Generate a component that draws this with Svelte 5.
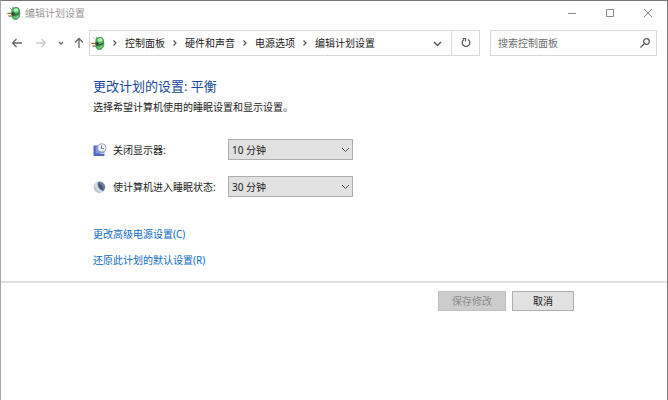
<script lang="ts">
  interface PlanSetting {
    id: string;
    label: string;
    icon: 'display' | 'sleep';
    value: string;
  }

  const title = '编辑计划设置';
  const crumbs = ['控制面板', '硬件和声音', '电源选项', title];
  const options = ['5 分钟', '10 分钟', '15 分钟', '30 分钟', '1 小时', '从不'];

  let settings = $state<PlanSetting[]>([
    { id: 'display-off', label: '关闭显示器:', icon: 'display', value: '10 分钟' },
    { id: 'sleep', label: '使计算机进入睡眠状态:', icon: 'sleep', value: '30 分钟' },
  ]);
  let query = $state('');
</script>

{#snippet powerIcon()}
  <svg class="power-icon" viewBox="0 0 14 14" aria-hidden="true">
    <path d="M4.5 3.5 2.5 1.5M6 2 5 .5M10 2l1-1.5" stroke="#888" stroke-width="0.7" fill="none" />
    <path d="M5 8.5c-.5 3 1 5 3.5 5s4.5-2.500 4.500-6z" fill="#52b563" stroke="#2c7a3d" stroke-width="0.6" />
    <ellipse cx="8.700" cy="5" rx="4" ry="3.700" fill="#4cb85f" stroke="#2c7a3d" stroke-width="0.6" />
    <ellipse cx="9" cy="4" rx="2.500" ry="1.800" fill="#b4efb8" />
    <path d="M4 6.500 6.500 6 8 7.500 7 10 4.500 9.500z" fill="#35453a" />
    <path d="M7.500 9c2.500 0 4-1 5.200-2.500" stroke="#24452d" fill="none" />
    <path d="M.5 7.500H4M1.500 10H5" stroke="#4b3c24" stroke-width="1.200" />
    <path d="M.5 7H4M1.500 9.500H5" stroke="#d9ad58" stroke-width="0.900" />
    <path d="M8.500 11.500c1 0 2-.5 2.800-1.500" stroke="#a3e8a8" stroke-width="0.900" fill="none" />
  </svg>
{/snippet}

{#snippet chevronDown()}
  <svg class="chevron" viewBox="0 0 9 9" aria-hidden="true">
    <path d="M1 3l3.500 3.500L8 3" />
  </svg>
{/snippet}

<div class="window">
  <header class="titlebar">
    {@render powerIcon()}
    <span class="title">{title}</span>
    <button class="caption" aria-label="最小化">
      <svg viewBox="0 0 10 10"><path d="M1 5.500h8" /></svg>
    </button>
    <button class="caption" aria-label="最大化">
      <svg viewBox="0 0 10 10"><path d="M1.500 1.500h7v7h-7z" /></svg>
    </button>
    <button class="caption" aria-label="关闭">
      <svg viewBox="0 0 10 10"><path d="M1 1l8 8M9 1l-8 8" /></svg>
    </button>
  </header>

  <nav class="toolbar">
    <button class="nav-button" aria-label="后退">
      <svg viewBox="0 0 12 12"><path d="M11 6H1.500M5.500 2l-4 4 4 4" /></svg>
    </button>
    <button class="nav-button" aria-label="前进" disabled>
      <svg viewBox="0 0 12 12"><path d="M1 6h9.500M6.500 2l4 4-4 4" /></svg>
    </button>
    <button class="nav-button recent" aria-label="最近浏览的位置">
      <svg viewBox="0 0 12 12"><path d="M4 5l2 2 2-2" /></svg>
    </button>
    <button class="nav-button up" aria-label="上移">
      <svg viewBox="0 0 12 12"><path d="M6 11V1.500M2 5.500l4-4 4 4" /></svg>
    </button>

    <div class="address">
      {@render powerIcon()}
      <div class="crumbs">
        {#each crumbs as crumb}
          <svg class="separator" viewBox="0 0 20 10" aria-hidden="true">
            <path d="M8.500 2.500 11 5 8.500 7.500" />
          </svg>
          <button class="crumb">{crumb}</button>
        {/each}
      </div>
      <button class="history" aria-label="以前的位置">{@render chevronDown()}</button>
      <button class="refresh" aria-label="刷新">
        <svg viewBox="0 0 12 12">
          <path d="M8 2.500a3.800 3.800 0 1 1-4 0" />
          <path d="M2.500 1.500h3v3" />
        </svg>
      </button>
    </div>

    <div class="search">
      <input type="search" placeholder="搜索控制面板" aria-label="搜索控制面板" bind:value={query} />
      <svg viewBox="0 0 12 12" aria-hidden="true">
        <circle cx="7.500" cy="4.500" r="2.800" />
        <path d="M5.400 6.600 1.500 10.500" />
      </svg>
    </div>
  </nav>

  <main class="content">
    <h1>更改计划的设置: 平衡</h1>
    <p>选择希望计算机使用的睡眠设置和显示设置。</p>

    <div class="settings">
      {#each settings as setting (setting.id)}
        <div class="setting">
          {#if setting.icon === 'display'}
            <svg class="setting-icon" viewBox="0 0 14 14" aria-hidden="true">
              <path d="M.5 2.500h7V12h-7z" fill="#4a63c4" />
              <path d="M2.500 3.500h9v7h-9z" fill="#7d98e6" />
              <path d="M1 11h10.500v2H.5z" fill="#5068b8" />
              <circle cx="8.800" cy="4.900" r="4.100" fill="#f1f3f7" stroke="#9aa1b0" />
              <path d="M8.500 2.500v3H11" fill="none" stroke="#6a7386" stroke-width="0.900" />
            </svg>
          {:else}
            <svg class="setting-icon" viewBox="0 0 14 14" aria-hidden="true">
              <circle cx="6.500" cy="7" r="6" fill="#d3d9e3" />
              <path d="M1.500 4.500A6 6 0 0 0 9 12.500 8 8 0 0 1 1.500 4.500z" fill="#b4bfd0" />
              <path d="M5 2c4-1.500 7.500 2 7 6-.3 1.500-1 2.500-2 3C6.500 10 3.500 6 5 2z" fill="#6d7d9b" />
              <path d="M5.500 3C8 4 10.500 7 10.500 10.500 7 9.500 4.500 6.500 5.500 3z" fill="#435372" />
            </svg>
          {/if}
          <label for={setting.id}>{setting.label}</label>
          <div class="select">
            <select id={setting.id} bind:value={setting.value}>
              {#each options as option}
                <option value={option}>{option}</option>
              {/each}
            </select>
            {@render chevronDown()}
          </div>
        </div>
      {/each}
    </div>

    <ul class="links">
      <li><a href="#advanced">更改高级电源设置(C)</a></li>
      <li><a href="#restore">还原此计划的默认设置(R)</a></li>
    </ul>
  </main>

  <footer class="actions">
    <button class="action save" disabled>保存修改</button>
    <button class="action">取消</button>
  </footer>
</div>

<style>
  :global(body) {
    margin: 0;
    background: #fff;
  }

  .window {
    box-sizing: border-box;
    min-height: 100vh;
    border: 1px solid #77777b;
    border-left-color: #a8a8a8;
    border-bottom: 0;
    background: #fff;
    color: #1a1a1a;
    font-family: 'Noto Sans', 'Noto Sans CJK SC', sans-serif;
    font-size: 10px;
    line-height: 16px;
  }

  button,
  input,
  select {
    box-sizing: border-box;
    margin: 0;
    padding: 0;
    border: 0;
    background: none;
    color: inherit;
    font: inherit;
  }

  svg {
    display: block;
    flex: none;
  }

  .power-icon {
    width: 14px;
    height: 14px;
  }

  .chevron {
    width: 9px;
    height: 9px;
    fill: none;
    stroke: #555;
  }

  .titlebar {
    display: flex;
    align-items: center;
    height: 24px;
    padding-left: 6px;
  }

  .title {
    flex: 1;
    padding-left: 4px;
    color: #999;
  }

  .caption {
    display: flex;
    align-items: center;
    justify-content: center;
    width: 38px;
    height: 24px;
  }

  .caption svg {
    width: 10px;
    height: 10px;
    fill: none;
    stroke: #8a8a8a;
  }

  .toolbar {
    display: flex;
    align-items: center;
    padding: 5px 10px 0 4px;
  }

  .nav-button {
    display: flex;
    align-items: center;
    justify-content: center;
    width: 24px;
    height: 26px;
  }

  .nav-button svg {
    width: 12px;
    height: 12px;
    fill: none;
    stroke: #666;
    stroke-width: 1.3;
  }

  .nav-button:disabled svg {
    stroke: #ccc;
  }

  .recent {
    width: 16px;
  }

  .up {
    width: 20px;
  }

  .address,
  .search {
    box-sizing: border-box;
    display: flex;
    align-items: center;
    height: 26px;
    border: 1px solid #d9d9d9;
  }

  .address {
    flex: 1;
    padding-left: 1px;
  }

  .crumbs {
    display: flex;
    flex: 1;
    align-items: center;
  }

  .crumb {
    white-space: nowrap;
  }

  .separator {
    width: 20px;
    height: 10px;
    fill: none;
    stroke: #555;
    stroke-width: 1.2;
  }

  .history,
  .refresh {
    display: flex;
    align-items: center;
    justify-content: center;
    width: 28px;
    height: 24px;
  }

  .history .chevron {
    stroke-width: 1.5;
  }

  .refresh {
    border-left: 1px solid #d9d9d9;
  }

  .refresh svg,
  .search svg {
    width: 12px;
    height: 12px;
    fill: none;
    stroke: #555;
    stroke-width: 1.2;
  }

  .search {
    flex: 0 0 167px;
    min-width: 0;
    margin-left: 10px;
    padding: 0 5px 0 7px;
  }

  .search input {
    flex: 1;
    width: 0;
    min-width: 0;
    outline: none;
    appearance: none;
  }

  .search input::placeholder {
    color: #6d6d6d;
    opacity: 1;
  }

  .content {
    padding: 19px 92px 13px;
  }

  h1 {
    margin: 0;
    color: #1b489b;
    font-size: 13px;
    font-weight: 400;
    line-height: 22px;
  }

  p {
    margin: 2px 0 0;
  }

  .settings {
    display: grid;
    gap: 16px;
    margin-top: 24px;
  }

  .setting {
    display: grid;
    grid-template-columns: 20px 115px 125px;
    align-items: center;
  }

  .setting-icon {
    width: 14px;
    height: 14px;
  }

  .select {
    position: relative;
  }

  .select select {
    display: block;
    width: 100%;
    height: 21px;
    padding: 0 16px 0 3px;
    border: 1px solid #adadad;
    border-radius: 0;
    background: #e1e1e1;
    appearance: none;
  }

  .select .chevron {
    position: absolute;
    top: 6px;
    right: 3px;
    pointer-events: none;
  }

  .links {
    display: grid;
    gap: 10px;
    margin: 29px 0 0;
    padding: 0;
    list-style: none;
  }

  .links a {
    color: #0b6cc4;
    text-decoration: none;
  }

  .links a:hover {
    text-decoration: underline;
  }

  .actions {
    display: flex;
    justify-content: flex-end;
    gap: 6px;
    padding: 8px 93px 16px;
    border-top: 2px solid #e0e0e0;
  }

  .action {
    width: 62px;
    height: 20px;
    border: 1px solid #adadad;
    background: #e1e1e1;
  }

  .save {
    width: 68px;
  }

  .action:disabled {
    border-color: #bfbfbf;
    background: #ccc;
    color: #8c8c8c;
  }
</style>
